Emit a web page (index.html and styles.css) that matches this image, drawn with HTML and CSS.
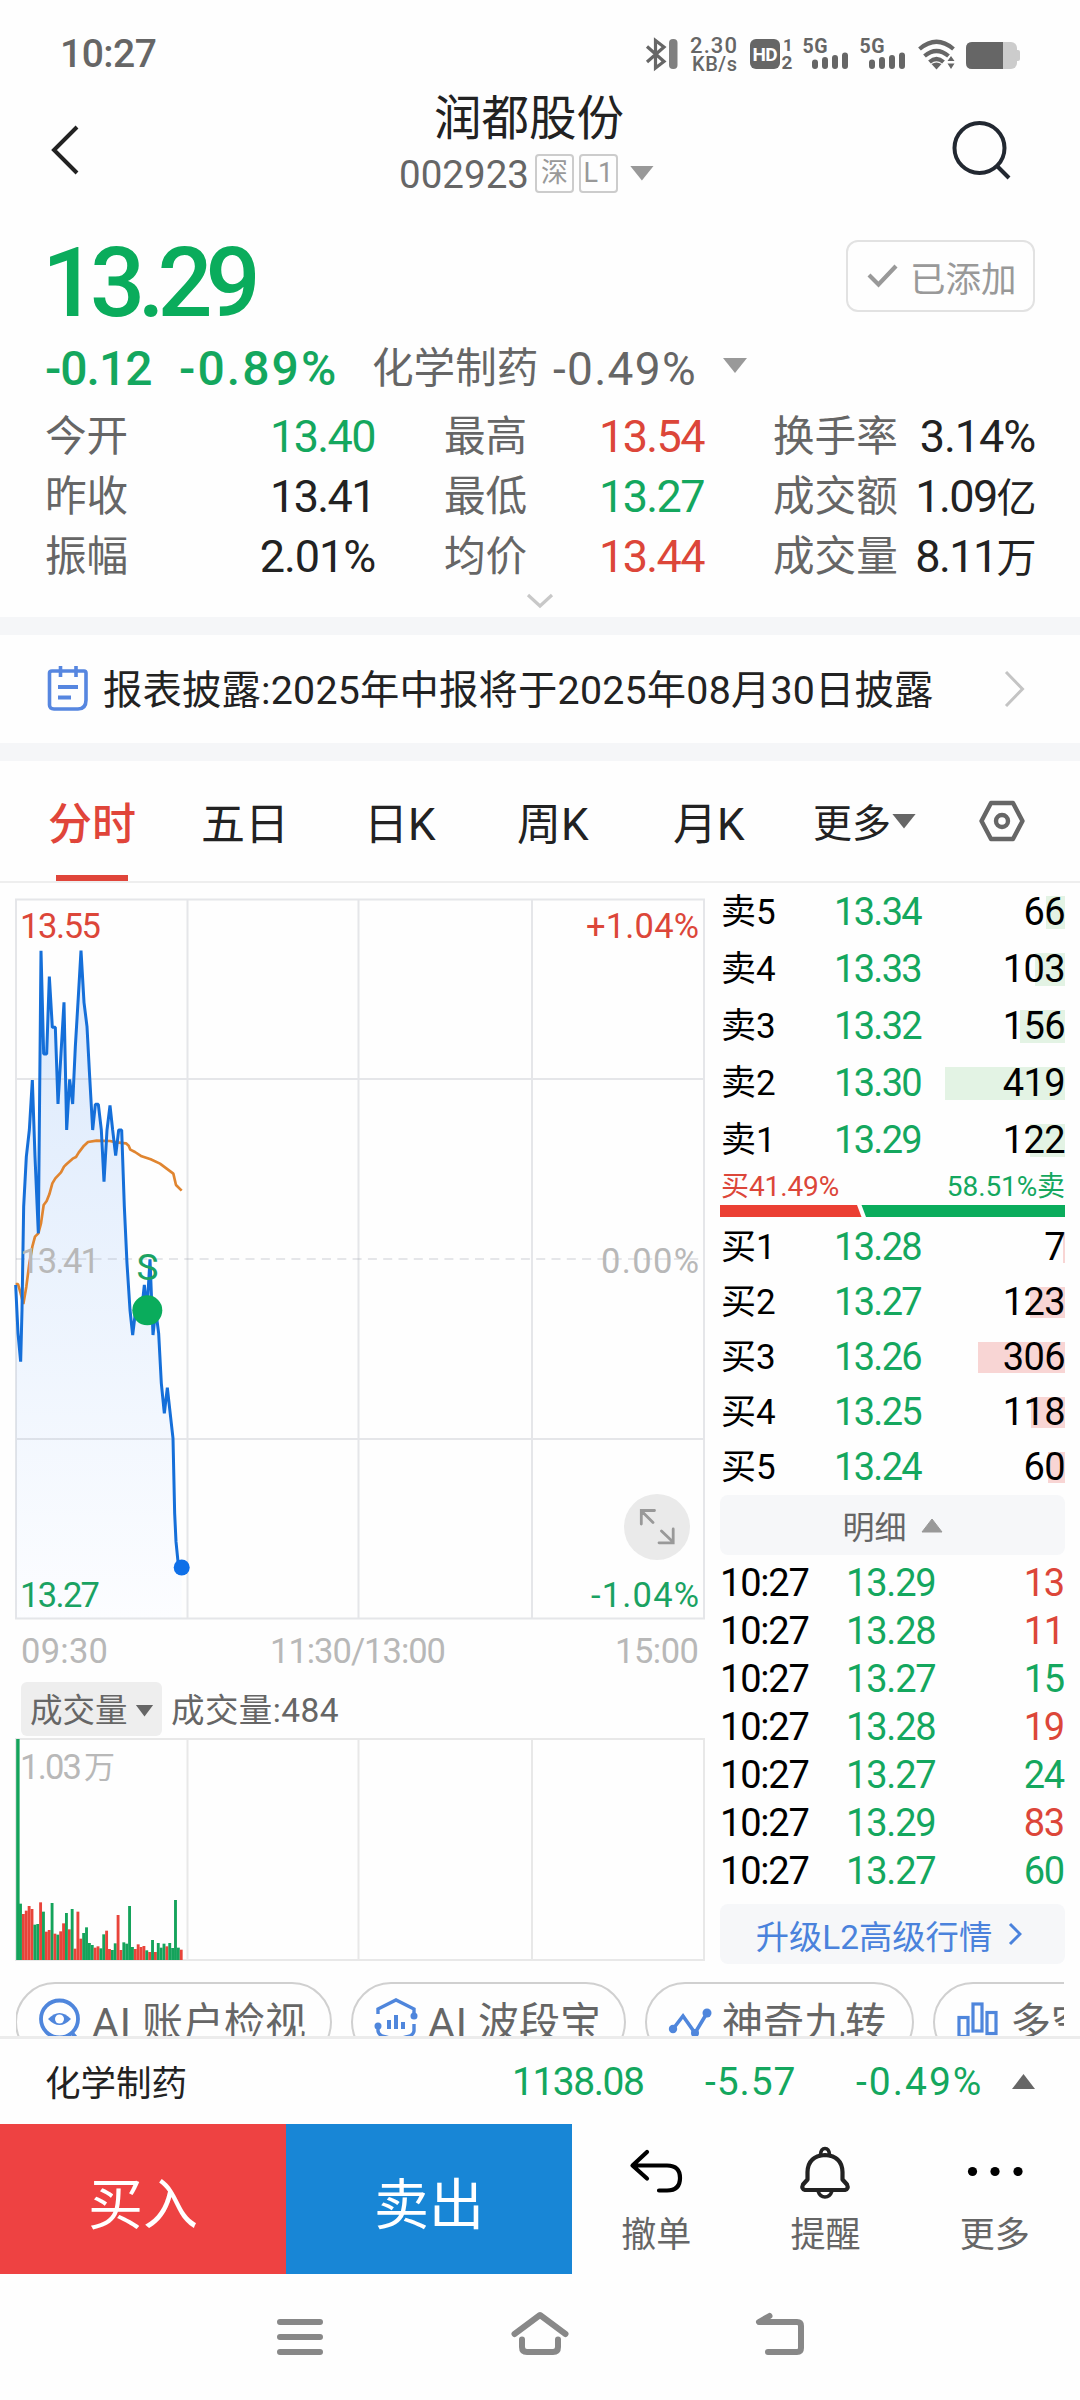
FILE: index.html
```html
<!DOCTYPE html>
<html lang="zh-CN">
<head>
<meta charset="utf-8">
<title>润都股份 002923</title>
<link rel="stylesheet" href="styles.css">
</head>
<body>
<div class="phone">
  <div class="status">
    <span class="clock">10:27</span>
    <svg class="status-icons" width="380" height="40" viewBox="642 34 380 40">
      <g fill="none" stroke="#666" stroke-width="3.2">
        <path d="M647 46.500L664 61.500L655.500 68V40.500L664 47L647 62"/>
      </g>
      <rect x="669" y="39" width="8.500" height="30" rx="4" fill="#808080"/>
      <g fill="#666" font-family="Roboto">
        <text x="690" y="52.500" font-size="22" font-weight="500" textLength="47">2.30</text>
        <text x="692" y="71" font-size="20" font-weight="500" textLength="45">KB/s</text>
        <rect x="750" y="39" width="30" height="30" rx="6"/>
        <text x="752.500" y="61" font-size="19" font-weight="700" fill="#fff" textLength="25">HD</text>
        <text x="783" y="51" font-size="17" font-weight="700">1</text>
        <text x="781.500" y="68.500" font-size="19" font-weight="700">2</text>
        <text x="802.500" y="53" font-size="19.500" font-weight="700" textLength="25">5G</text>
        <text x="859.500" y="53" font-size="19.500" font-weight="700" textLength="25">5G</text>
      </g>
      <g stroke="#666" stroke-width="6" stroke-linecap="round">
        <path d="M815 62.500V66M825 60V66M835 58V66M845 55.500V66"/>
        <path d="M872 62.500V66M882 60V66M892 58V66M902 55.500V66"/>
      </g>
      <g fill="none" stroke="#666" stroke-width="4.200">
        <path d="M919.500 49Q936.500 34.500 953.500 49"/>
        <path d="M924.500 56Q936.500 46 948.500 56"/>
        <path d="M929.500 62Q936.500 56 943.500 62"/>
      </g>
      <path d="M931.500 64Q936.500 61 941.500 64L936.500 69.500Z" fill="#666"/>
      <path d="M947.500 61L951 56L954.500 61ZM947.500 63.500L951 69L954.500 63.500Z" fill="#666"/>
      <rect x="966" y="42" width="51" height="27" rx="6" fill="#ccc"/>
      <rect x="1015" y="50" width="5" height="11" rx="2" fill="#ccc"/>
      <path d="M972 42H1003V69H972Q966 69 966 63V48Q966 42 972 42Z" fill="#666"/>
    </svg>
  </div>

  <header class="header">
    <svg class="back" width="30" height="52" viewBox="0 0 30 52"><path d="M27 3L4 26L27 49" fill="none" stroke="#222" stroke-width="4"/></svg>
    <div class="title">
      <div class="name">润都股份</div>
      <div class="code"><span>002923</span><i class="tag">深</i><i class="tag latin">L1</i><b class="tri-down"></b></div>
    </div>
    <svg class="search" width="62" height="62" viewBox="0 0 62 62"><g fill="none" stroke="#222831" stroke-width="4"><circle cx="29.500" cy="30" r="25"/><path d="M47 48L59 60"/></g></svg>
  </header>

  <section class="quote">
    <div class="price-row">
      <div class="price">13.29</div>
      <div class="added">
        <svg width="32" height="26" viewBox="0 0 32 26"><path d="M2 12L11.500 21.500L29 3" fill="none" stroke="#999" stroke-width="4.200"/></svg>
        <span>已添加</span>
      </div>
    </div>
    <div class="change">
      <span class="chg green">-0.12</span><span class="pct green">-0.89%</span><span class="sector">化学制药</span><span class="sector-pct">-0.49%</span><b class="tri-down"></b>
    </div>
    <div class="stats">
      <span>今开</span><em class="green">13.40</em><span>最高</span><em class="red">13.54</em><span>换手率</span><em class="wide">3.14%</em>
      <span>昨收</span><em>13.41</em><span>最低</span><em class="green">13.27</em><span>成交额</span><em>1.09<small>亿</small></em>
      <span>振幅</span><em class="wide">2.01%</em><span>均价</span><em class="red">13.44</em><span>成交量</span><em>8.11<small>万</small></em>
    </div>
    <svg class="expand" width="28" height="16" viewBox="0 0 28 16"><path d="M2 2L14 13L26 2" fill="none" stroke="#c8c8c8" stroke-width="3.200"/></svg>
  </section>

  <section class="notice">
    <svg width="42" height="48" viewBox="0 0 42 48"><g fill="none" stroke="#5686e0" stroke-width="3.600"><path d="M5 6H37Q39 6 39 8V35Q39 44 31 44H7Q2.500 44 2.500 40V8Q2.500 6 5 6ZM13.500 1V12M29 1V12"/><path d="M11 22H31M11 32.500H24" stroke-width="4"/></g></svg>
    <p>报表披露:2025年中报将于2025年08月30日披露</p>
    <svg class="go" width="22" height="38" viewBox="0 0 22 38"><path d="M2 2L18.500 19L2 36" fill="none" stroke="#c4c4c4" stroke-width="3"/></svg>
  </section>

  <nav class="tabs">
    <span class="active">分时</span><span>五日</span><span>日K</span><span>周K</span><span>月K</span><span class="more">更多</span><b class="tri-down dark"></b>
    <svg width="48" height="44" viewBox="0 0 48 44"><g fill="none" stroke="#666" stroke-width="4.400"><path d="M13 4H35L44.500 22L35 40H13L3.500 22Z" stroke-linejoin="round"/><circle cx="24" cy="22" r="6"/></g></svg>
  </nav>

  <main class="market">
    <div class="charts">
      <svg class="minute" width="712" height="790" viewBox="0 883 712 790" font-family="Roboto" font-size="34.500">
        <defs><linearGradient id="fade" x1="0" y1="0" x2="0" y2="1"><stop offset="0" stop-color="#dbe9fc"/><stop offset="1" stop-color="#fcfdff"/></linearGradient></defs>
        <path transform="translate(0 880) scale(.33333)" fill="url(#fade)" d="M47 1215L54 1360L62 1445L66 1290L71 980L79 830L88 750L97 600L105 830L115 1060L123 212L131 522H140L148 290L157 442H166L174 672L183 520L192 367L200 750L209 598L218 672L226 500L235 350L243 212L252 367L261 440L269 590L278 750L286 673H295L304 750L312 905L321 750L330 676L338 750L347 827L356 750H365L373 980L381 1150L390 1290L398 1365L407 1290H425L433 1215L441 1290L450 1138L459 1365L467 1290L476 1360L484 1510L493 1600L502 1523L510 1595L519 1675L524 1900L528 1985L535 2055L545 2062V2215H47Z"/>
        <g fill="none" stroke="#9aa0aa" stroke-opacity=".25" stroke-width="2">
          <path d="M16 899.500H704V1618.500H16ZM187.500 900V1618M358.500 900V1618M532 900V1618M16 1079H704M16 1439H704"/>
          <path d="M16 1259H704" stroke-dasharray="9 6.300"/>
        </g>
        <g transform="translate(0 880) scale(.33333)" fill="none" stroke-linejoin="bevel" stroke-width="8">
          <path stroke="#e08530" d="M47 1212H54L62 1240L70 1272L79 1220L88 1150L97 1100L105 1070L115 1060L123 1030L131 975L140 963L148 943L157 910L166 895L183 877L192 860L200 852L218 836L228 831L236 818L252 797L264 786L290 782L330 783L350 787L378 790L386 797L391 809L405 816L425 829L452 838L480 851L500 866L520 881L528 915L545 932"/>
          <path stroke="#156fd9" stroke-width="9" d="M47 1215L54 1360L62 1445L66 1290L71 980L79 830L88 750L97 600L105 830L115 1060L123 212L131 522H140L148 290L157 442H166L174 672L183 520L192 367L200 750L209 598L218 672L226 500L235 350L243 212L252 367L261 440L269 590L278 750L286 673H295L304 750L312 905L321 750L330 676L338 750L347 827L356 750H365L373 980L381 1150L390 1290L398 1365L407 1290H425L433 1215L441 1290L450 1138L459 1365L467 1290L476 1360L484 1510L493 1600L502 1523L510 1595L519 1675L524 1900L528 1985L535 2055L545 2062"/>
        </g>
        <circle cx="147.300" cy="1310.300" r="15" fill="#0aac5c"/>
        <circle cx="181.700" cy="1567.500" r="8" fill="#0f70e8"/>
        <text x="136.500" y="1280" font-size="37" fill="#1aa262">S</text>
        <circle cx="657" cy="1527" r="33" fill="#eaeaea"/>
        <path d="M653 1522.500L641.500 1511M654.500 1510.500H641.300V1524M661.500 1531L673 1542M659 1542.800H673.200V1529" fill="none" stroke="#999" stroke-width="2.800" stroke-linecap="round"/>
        <text x="20" y="938" fill="#dc4639" textLength="81">13.55</text>
        <text x="586" y="938" fill="#dc4639" textLength="113">+1.04%</text>
        <g fill="#b8b8b8">
          <text x="20" y="1273" textLength="80">13.41</text>
          <text x="601" y="1273" textLength="98">0.00%</text>
          <text x="21" y="1663" textLength="87">09:30</text>
          <text x="270" y="1663" textLength="176">11:30/13:00</text>
          <text x="615" y="1663" textLength="84">15:00</text>
        </g>
        <text x="20" y="1607" fill="#1aa262" textLength="80">13.27</text>
        <text x="591" y="1607" fill="#1aa262" textLength="108">-1.04%</text>
      </svg>
      <div class="volume-head">
        <span class="picker">成交量<b class="tri-down dark small"></b></span><span class="vol">成交量:484</span>
      </div>
      <svg class="volume" width="712" height="226" viewBox="0 1736 712 226">
        <path d="M16 1739H704V1960H16ZM187.500 1740V1960M358.500 1740V1960M532 1740V1960" fill="none" stroke="#e8e8e8" stroke-width="2"/>
        <text x="20" y="1779" font-size="34.500" fill="#b8b8b8" font-family="Roboto" textLength="62">1.03</text>
        <text x="84" y="1778" font-size="31" fill="#b8b8b8" font-family="Noto Sans CJK SC">万</text>
        <g id="bars"></g>
      </svg>
    </div>

    <aside class="book">
      <div class="level sell"><span>卖5</span><em>13.34</em><i style="width:19px"></i><strong>66</strong></div>
      <div class="level sell"><span>卖4</span><em>13.33</em><i style="width:30px"></i><strong>103</strong></div>
      <div class="level sell"><span>卖3</span><em>13.32</em><i style="width:45px"></i><strong>156</strong></div>
      <div class="level sell"><span>卖2</span><em>13.30</em><i style="width:120px"></i><strong>419</strong></div>
      <div class="level sell"><span>卖1</span><em>13.29</em><i style="width:35px"></i><strong>122</strong></div>
      <div class="ratio"><span class="red">买41.49%</span><span class="green">58.51%卖</span></div>
      <svg class="ratio-bar" width="345" height="12" viewBox="0 0 345 12"><path d="M0 0H137L141.500 12H0Z" fill="#eb3f33"/><path d="M141.500 0H345V12H146Z" fill="#0aac5c"/></svg>
      <div class="buys">
        <div class="level buy"><span>买1</span><em>13.28</em><i style="width:2px"></i><strong>7</strong></div>
        <div class="level buy"><span>买2</span><em>13.27</em><i style="width:35px"></i><strong>123</strong></div>
        <div class="level buy"><span>买3</span><em>13.26</em><i style="width:87px"></i><strong>306</strong></div>
        <div class="level buy"><span>买4</span><em>13.25</em><i style="width:34px"></i><strong>118</strong></div>
        <div class="level buy"><span>买5</span><em>13.24</em><i style="width:17px"></i><strong>60</strong></div>
      </div>
      <div class="detail">明细<svg width="22" height="15" viewBox="0 0 22 15"><path d="M11 1L21 14H1Z" fill="#999" stroke="#999" stroke-linejoin="round"/></svg></div>
      <div class="ticks">
        <div><span>10:27</span><em>13.29</em><strong class="red">13</strong></div>
        <div><span>10:27</span><em>13.28</em><strong class="red">11</strong></div>
        <div><span>10:27</span><em>13.27</em><strong class="green">15</strong></div>
        <div><span>10:27</span><em>13.28</em><strong class="red">19</strong></div>
        <div><span>10:27</span><em>13.27</em><strong class="green">24</strong></div>
        <div><span>10:27</span><em>13.29</em><strong class="red">83</strong></div>
        <div><span>10:27</span><em>13.27</em><strong class="green">60</strong></div>
      </div>
      <div class="upgrade">升级L2高级行情<svg width="14" height="24" viewBox="0 0 14 24"><path d="M2 2L12 12L2 22" fill="none" stroke="#4a82dc" stroke-width="3"/></svg></div>
    </aside>
  </main>

  <div class="chips">
    <div class="chip c1"><svg width="44" height="46" viewBox="0 0 44 46"><g fill="none" stroke="#4f86dc" stroke-width="3.800"><circle cx="21.500" cy="21" r="18.500"/><path d="M34 35L41 43"/><path d="M10 21Q21.500 9 33 21Q21.500 33 10 21Z" fill="#4f86dc" stroke="none"/></g><circle cx="21.500" cy="21" r="4.500" fill="#fff"/></svg><span class="ai">AI</span><span>账户检视</span></div>
    <div class="chip c2"><svg width="44" height="46" viewBox="0 0 44 46"><g fill="none" stroke="#4f86dc" stroke-width="3.400"><path d="M4 16V11L22 2L40 11V16M4 28V33Q5 38 12 39L16 40M40 26V33Q39 38 32 39L28 40"/><path d="M15 22V31M22 17V31M29 24V31" stroke-width="4"/></g><circle cx="40" cy="18" r="3.500" fill="#4f86dc"/><circle cx="4" cy="28" r="3.500" fill="#4f86dc"/></svg><span class="ai">AI</span><span>波段宝</span></div>
    <div class="chip c3"><svg width="44" height="46" viewBox="0 0 44 46"><path d="M5 31L15 18L27 35L39 15" fill="none" stroke="#4f86dc" stroke-width="3.600"/><g fill="#4f86dc"><circle cx="5" cy="31" r="4.200"/><circle cx="27" cy="35" r="4"/><circle cx="39" cy="15" r="4.500"/></g></svg><span>神奇九转</span></div>
    <div class="chip c4"><svg width="44" height="46" viewBox="0 0 44 46"><g fill="none" stroke="#4f86dc" stroke-width="3.200"><rect x="3" y="19.500" width="9" height="19"/><rect x="17" y="6" width="9" height="27"/><rect x="31" y="14.500" width="9" height="21"/></g></svg><span>多空</span></div>
  </div>

  <div class="index">
    <span class="iname">化学制药</span><span class="ival">1138.08</span><span class="ichg">-5.57</span><span class="ipct">-0.49%</span><b class="tri-up"></b>
  </div>

  <div class="actions">
    <button class="buy-btn">买入</button><button class="sell-btn">卖出</button>
    <div class="tool"><svg width="60" height="56" viewBox="0 0 60 56"><path d="M20 7L5.500 20.500L20 33.500M6 20.500H40Q53 20.500 53 33Q53 45.500 40 45.500H32" fill="none" stroke="#000" stroke-width="4.200" stroke-linecap="round" stroke-linejoin="round"/></svg><span>撤单</span></div>
    <div class="tool"><svg width="60" height="56" viewBox="0 0 60 56"><g fill="none" stroke="#222" stroke-width="4.200" stroke-linejoin="round"><path d="M29 10Q46 11 46.500 27V34.500L51 39.500Q53 44 49 45H9Q5 44 7 39.500L11.500 34.500V27Q12 11 29 10Z"/><path d="M24.500 9.500Q25 3.500 29 3.500Q33 3.500 33.500 9.500M22 46Q24 52 29 52Q34 52 36 46" stroke-width="3.600"/></g></svg><span>提醒</span></div>
    <div class="tool"><svg width="60" height="56" viewBox="0 0 60 56"><circle cx="7.500" cy="26.500" r="4.600"/><circle cx="30" cy="26.500" r="4.600"/><circle cx="53" cy="26.500" r="4.600"/></svg><span>更多</span></div>
  </div>

  <div class="sysnav">
    <svg width="240" height="60" viewBox="180 2304 240 60"><path d="M280 2322H320M280 2337H320M280 2352H320" stroke="#888" stroke-width="6" stroke-linecap="round"/></svg>
    <svg width="240" height="60" viewBox="420 2304 240 60"><path d="M514.500 2334L540 2315L565.500 2334M522 2339.500V2347Q522 2352 527 2352H553Q558 2352 558 2347V2339.500" fill="none" stroke="#888" stroke-width="6" stroke-linecap="round" stroke-linejoin="round"/></svg>
    <svg width="240" height="60" viewBox="660 2304 240 60"><path d="M769.500 2316L759 2322H797Q801 2322 801 2326V2348Q801 2352 797 2352H768" fill="none" stroke="#888" stroke-width="6" stroke-linecap="round" stroke-linejoin="round"/></svg>
  </div>
</div>
<script src="volume.js"></script>
</body>
</html>
```
FILE: volume.js
```js
// One-minute volume bars: direction (G = down, R = up) and height in thirds of a pixel.
const volumes = "G663 G169 R138 R148 R162 R153 G106 G108 R173 G145 R85 R90 G171 R79 G76 R86 R110 G141 R92 G153 R34 R145 R64 G81 G98 G51 G45 R37 R41 G35 G77 R88 R33 G30 G50 R135 R30 G53 G49 G162 G39 R33 R47 R39 R42 G29 R24 G60 R24 G51 G37 G49 R41 G51 G36 G180 G37 R31".split(" ");
const group = document.getElementById("bars");
volumes.forEach((v, i) => {
  const h = Number(v.slice(1)) / 3;
  const r = document.createElementNS("http://www.w3.org/2000/svg", "rect");
  r.setAttribute("x", 16.2 + i * 2.87);
  r.setAttribute("y", 1960 - h);
  r.setAttribute("width", i ? 2.87 : 3.4);
  r.setAttribute("height", h);
  r.setAttribute("fill", v[0] === "G" ? "#14a35b" : "#e8443a");
  group.appendChild(r);
});
```
FILE: styles.css
```css
* { box-sizing: border-box; }
body {
  margin: 0;
  background: #fff;
  color: #222;
  font-family: Roboto, "Noto Sans CJK SC", sans-serif;
}
em, i { font-style: normal; }
strong, b { font-weight: 400; }
svg { display: block; flex: none; }
.phone { width: 1080px; height: 2400px; overflow: hidden; display: flex; flex-direction: column; background: #fefefe; }
.phone > * { flex: none; }
.green { color: #14a75e; }
.red { color: #dc4639; }

.tri-down { width: 24px; height: 15px; background: #999; clip-path: polygon(0 0, 100% 0, 50% 100%); flex: none; }
.tri-down.dark { background: #666; }
.tri-down.small { width: 18px; height: 12px; }
.tri-up { width: 23px; height: 15px; background: #666; clip-path: polygon(50% 0, 100% 100%, 0 100%); flex: none; }

.status { height: 84px; display: flex; justify-content: space-between; padding: 34px 58px 0 60px; }
.clock { font-size: 39px; line-height: 41px; font-weight: 500; letter-spacing: -.5px; color: #666; }

.header { height: 142px; display: flex; justify-content: space-between; padding: 0 68px 0 50px; }
.back { margin-top: 40px; }
.search { margin-top: 34px; }
.title { display: flex; flex-direction: column; align-items: center; padding: 5px 0 0 23px; }
.name { font-size: 47.5px; line-height: 60px; padding-left: 5px; }
.code { display: flex; align-items: center; height: 48px; font-size: 38.5px; line-height: 48px; color: #666; }
.code span { padding-top: 4px; }
.tag { width: 39px; height: 39px; margin-left: 6px; border: 2px solid #ccc; border-radius: 4px; font-size: 27px; line-height: 35px; text-align: center; color: #999; }
.tag + .tag { margin-left: 5px; }
.code .tri-down { margin-left: 12px; }

.quote { height: 391px; padding: 14px 45px 0; }
.price-row { display: flex; justify-content: space-between; height: 84px; }
.price { font-size: 97px; line-height: 86px; font-weight: 500; letter-spacing: -7.2px; color: #0aac5c; margin-left: -3px; }
.added { width: 189px; height: 72px; border: 2px solid #e2e2e2; border-radius: 12px; display: flex; align-items: center; gap: 11px; padding-left: 19px; font-size: 35.5px; color: #999; }
.change { display: flex; align-items: center; height: 88px; line-height: 90px; padding-top: 1px; }
.chg, .pct { font-size: 48px; font-weight: 500; width: 134px; letter-spacing: -1px; }
.pct { letter-spacing: 2.1px; width: 193px; }
.sector { font-size: 41.6px; color: #666; width: 181px; }
.sector-pct { font-size: 46px; color: #666; letter-spacing: 1.3px; width: 170px; }
.change .tri-down { margin-top: -6px; }
.stats { display: grid; grid-template-columns: 90px 240px 160px 169px 197px 134px; grid-auto-rows: 60px; line-height: 60px; margin-top: -5px; }
.stats span { font-size: 41.6px; color: #666; white-space: nowrap; }
.stats span:nth-of-type(3n+2), .stats span:nth-of-type(3n) { padding-left: 69px; }
.stats em { font-size: 45px; letter-spacing: -1.6px; text-align: right; white-space: nowrap; margin-left: -60px; }
.stats em.wide { letter-spacing: -1.1px; }
.stats small { font-size: 40px; }
.expand { margin: 6px auto 0; }

.notice { height: 144px; border: solid #f5f6f8; border-width: 18px 0; display: flex; align-items: center; padding: 0 54px 0 47px; }
.notice p { flex: 1; margin: 3px 0 0 14px; font-size: 39.3px; letter-spacing: .22px; line-height: 60px; white-space: nowrap; }

.tabs { height: 122px; border-bottom: 2px solid #eee; display: grid; grid-template-columns: 153px 163px 153px 156px 140px 79px 86px 48px; padding-left: 48px; align-items: center; font-size: 44px; line-height: 120px; }
.tabs span { height: 120px; padding-top: 4px; }
.tabs .active { color: #e0453a; font-weight: 500; background: linear-gradient(#e0453a, #e0453a) 8px 114px / 72px 6px no-repeat; }
.tabs .more { font-size: 39px; padding-top: 3px; }
.tabs svg { margin-top: -1px; }

.market { display: flex; height: 1091px; }
.charts { width: 720px; }
.volume-head { display: flex; height: 63px; padding: 9px 0 0 21px; gap: 9px; font-size: 33.5px; line-height: 52px; color: #666; }
.picker { display: flex; align-items: center; gap: 8px; width: 141px; height: 54px; padding: 3px 0 0 9px; border-radius: 6px; background: #eee; font-size: 32.5px; }
.vol { padding-top: 3px; letter-spacing: .4px; }

.book { width: 345px; color: #000; padding-top: 1px; }
.level { display: grid; grid-template-columns: 114px 90px 141px; align-items: center; height: 57px; font-size: 38px; line-height: 55px; white-space: nowrap; }
.level > * { grid-row: 1; }
.level span { padding-left: 1px; grid-column: 1; font-size: 35px; }
.level em { color: #14a75e; letter-spacing: -1.7px; grid-column: 2; }
.level i { grid-column: 3; justify-self: end; height: 33px; background: #e3f3e4; }
.level strong { grid-column: 3; text-align: right; letter-spacing: -.6px; }
.buy { height: 55px; }
.buy i { background: #f8d5d4; height: 31px; }
.ratio { display: flex; justify-content: space-between; font-size: 28px; line-height: 36px; height: 36px; padding-left: 1px; letter-spacing: -.1px; }
.buys { height: 278px; padding-top: 3px; }
.detail, .upgrade { height: 60px; border-radius: 8px; background: #f6f7f9; display: flex; align-items: center; justify-content: center; }
.detail { gap: 14px; font-size: 32px; color: #666; }
.ticks { padding-top: 4px; height: 349px; }
.ticks div { display: grid; grid-template-columns: 126px 111px 108px; height: 48px; font-size: 38px; line-height: 48px; letter-spacing: -1.2px; }
.ticks em { color: #14a75e; }
.ticks strong { text-align: right; padding-right: 1px; }
.upgrade { gap: 16px; font-size: 33.3px; color: #4a82dc; padding-right: 7px; }

.chips { height: 62px; margin: 0 16px; padding-top: 8px; overflow: hidden; display: flex; gap: 19px; }
.chip { height: 80px; border: 2px solid #d0d0d0; border-radius: 40px; display: flex; padding: 14px 0 0 21px; font-size: 41px; line-height: 50px; color: #666; flex: none; white-space: nowrap; }
.chip svg { margin-right: 10px; }
.chip .ai { margin-right: 10px; letter-spacing: 1px; }
.c1 { width: 317px; } .c2 { width: 275px; } .c3 { width: 269px; } .c4 { width: 250px; }
.chip:first-child { margin-left: -1px; }

.index { height: 88px; border-top: 3px solid #ececec; display: grid; grid-template-columns: 467px 193px 151px 156px 23px; padding-left: 45px; align-items: center; font-size: 39px; color: #14a75e; }
.iname { font-size: 35.5px; color: #222; margin-top: -3px; }
.ival { letter-spacing: -1.5px; }
.ichg { letter-spacing: .9px; }
.ipct { letter-spacing: 2px; }

.actions { height: 150px; display: grid; grid-template-columns: 286px 286px 1fr 1fr 1fr; }
.actions button { border: 0; color: #fff; font: 55px/150px Roboto, "Noto Sans CJK SC", sans-serif; padding: 6px 0 0; height: 150px; overflow: hidden; }
.buy-btn { background: #ee4242; }
.sell-btn { background: #1886d6; }
.tool { display: flex; flex-direction: column; align-items: center; padding-top: 21px; font-size: 35px; line-height: 69px; color: #666; }
.tool span { margin-left: -1px; }
.sysnav { display: flex; justify-content: center; padding-top: 30px; }
```
